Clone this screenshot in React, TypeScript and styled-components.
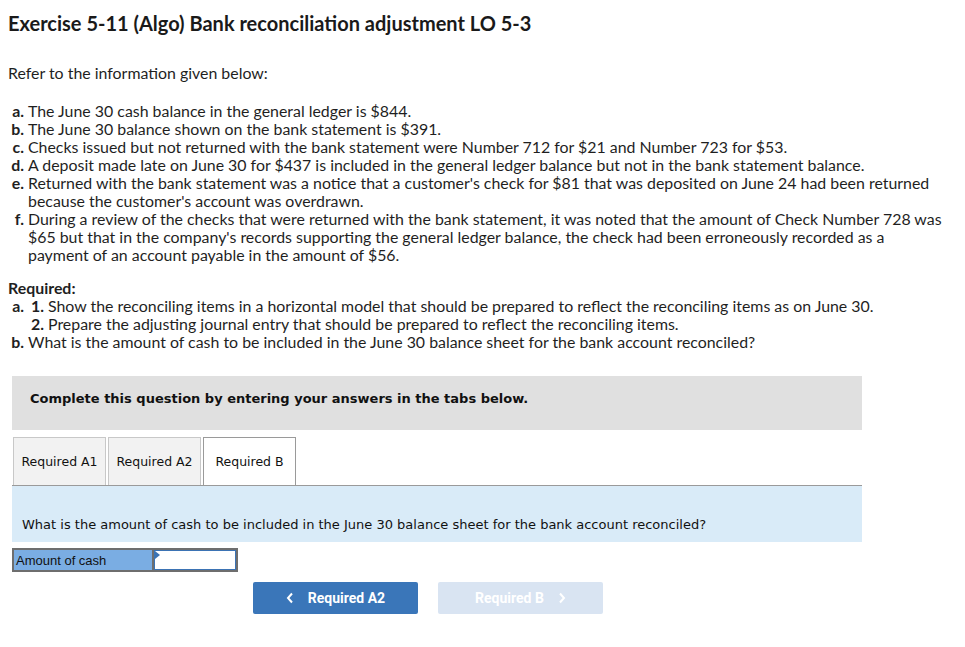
import React from "react";
import styled, { createGlobalStyle } from "styled-components";

const Global = createGlobalStyle`
  html, body { margin: 0; padding: 0; background: #fff; }
  body { font-family: Lato, "Open Sans", sans-serif; color: #1f1f1f; }
  * { box-sizing: border-box; }
`;

const Page = styled.div`
  padding: 10px 22px 30px 8px;
  width: 965px;
`;

const Title = styled.h1`
  font-family: Lato, sans-serif;
  font-weight: 700;
  font-size: 20px;
  line-height: 26px;
  margin: 0 0 28px 0;
  color: #1a1a1a;
`;

const Para = styled.p`
  margin: 0 0 20px 0;
  font-size: 15.9px;
  line-height: 18px;
`;

const List = styled.ol`
  list-style: none;
  margin: 0;
  padding: 0;
  font-size: 15.9px;
  line-height: 18px;
`;

const Item = styled.li`
  display: grid;
  grid-template-columns: 20px 1fr;
`;

const Marker = styled.span`
  font-weight: 700;
  text-align: right;
  padding-right: 4px;
`;

const Text = styled.span``;

const InfoBlock = styled.div`
  margin-bottom: 15px;
`;

const ReqHead = styled.div`
  font-size: 15.9px;
  line-height: 18px;
  font-weight: 700;
`;

const SubItem = styled.div`
  display: grid;
  grid-template-columns: 20px 1fr;
`;

const Panel = styled.div`
  margin: 25px 0 0 4px;
  width: 850px;
  font-family: Verdana, "DejaVu Sans", sans-serif;
`;

const Banner = styled.div`
  background: #e0e0e0;
  height: 54px;
  display: flex;
  align-items: center;
  padding: 0 0 9px 18px;
  font-weight: 700;
  font-size: 13px;
  color: #111;
`;

const Tabs = styled.div`
  display: flex;
  margin-top: 7px;
  border-bottom: 1px solid #9a9a9a;
  padding-left: 1px;
  gap: 2px;
`;

const Tab = styled.div<{ $active?: boolean }>`
  width: 93px;
  height: 48px;
  display: flex;
  align-items: center;
  justify-content: center;
  font-size: 12.5px;
  color: #111;
  background: ${(p) => (p.$active ? "#fff" : "#f2f2f2")};
  border: 1px solid ${(p) => (p.$active ? "#9a9a9a" : "#c8c8c8")};
  border-bottom: none;
  margin-bottom: ${(p) => (p.$active ? "-1px" : "0")};
`;

const Question = styled.div`
  background: #d9ebf8;
  height: 56px;
  padding: 0 0 10px 10px;
  display: flex;
  align-items: flex-end;
  font-size: 13px;
  color: #111;
`;

const AnswerRow = styled.div`
  display: flex;
  margin-top: 6px;
  height: 24px;
`;

const AnswerLabel = styled.div`
  width: 140px;
  background: #7aade3;
  border: 2px solid #6e6e6e;
  border-right: none;
  font-family: Arial, "Liberation Sans", sans-serif;
  font-size: 13px;
  display: flex;
  align-items: center;
  padding-left: 2px;
  color: #111;
`;

const AnswerInput = styled.div`
  position: relative;
  width: 86px;
  background: #fff;
  border: 2px solid #6e6e6e;
  box-shadow: inset 0 0 0 1px #3b73b4;
`;

const Flag = styled.span`
  position: absolute;
  left: 1px;
  top: 1px;
  width: 0;
  height: 0;
  border-top: 4px solid transparent;
  border-bottom: 4px solid transparent;
  border-left: 5px solid #3b73b4;
`;

const Nav = styled.div`
  display: flex;
  gap: 20px;
  margin: 10px 0 0 241px;
`;

const NavButton = styled.div<{ $disabled?: boolean }>`
  width: 165px;
  height: 32px;
  border-radius: 2px;
  background: ${(p) => (p.$disabled ? "#d9e4f2" : "#3a76b9")};
  color: #fff;
  font-family: Roboto, sans-serif;
  font-weight: 700;
  font-size: 14px;
  display: flex;
  align-items: center;
  justify-content: center;
  gap: 14px;
`;

const Chevron = ({ dir }: { dir: "left" | "right" }) => (
  <svg width="8" height="12" viewBox="0 0 8 12">
    <path
      d={dir === "left" ? "M6 1.5 L2 6 L6 10.5" : "M2 1.5 L6 6 L2 10.5"}
      fill="none"
      stroke="#fff"
      strokeWidth="2"
    />
  </svg>
);

const info: [string, string][] = [
  ["a.", "The June 30 cash balance in the general ledger is $844."],
  ["b.", "The June 30 balance shown on the bank statement is $391."],
  ["c.", "Checks issued but not returned with the bank statement were Number 712 for $21 and Number 723 for $53."],
  ["d.", "A deposit made late on June 30 for $437 is included in the general ledger balance but not in the bank statement balance."],
  ["e.", "Returned with the bank statement was a notice that a customer's check for $81 that was deposited on June 24 had been returned because the customer's account was overdrawn."],
  ["f.", "During a review of the checks that were returned with the bank statement, it was noted that the amount of Check Number 728 was $65 but that in the company's records supporting the general ledger balance, the check had been erroneously recorded as a payment of an account payable in the amount of $56."],
];

export default function App() {
  return (
    <>
      <Global />
      <Page>
        <Title>Exercise 5-11 (Algo) Bank reconciliation adjustment LO 5-3</Title>
        <Para>Refer to the information given below:</Para>
        <InfoBlock>
          <List>
            {info.map(([m, t]) => (
              <Item key={m}>
                <Marker>{m}</Marker>
                <Text>{t}</Text>
              </Item>
            ))}
          </List>
        </InfoBlock>
        <ReqHead>Required:</ReqHead>
        <List>
          <Item>
            <Marker>a.</Marker>
            <div>
              <SubItem>
                <Marker>1.</Marker>
                <Text>Show the reconciling items in a horizontal model that should be prepared to reflect the reconciling items as on June 30.</Text>
              </SubItem>
              <SubItem>
                <Marker>2.</Marker>
                <Text>Prepare the adjusting journal entry that should be prepared to reflect the reconciling items.</Text>
              </SubItem>
            </div>
          </Item>
          <Item>
            <Marker>b.</Marker>
            <Text>What is the amount of cash to be included in the June 30 balance sheet for the bank account reconciled?</Text>
          </Item>
        </List>
        <Panel>
          <Banner>Complete this question by entering your answers in the tabs below.</Banner>
          <Tabs>
            <Tab>Required A1</Tab>
            <Tab>Required A2</Tab>
            <Tab $active>Required B</Tab>
          </Tabs>
          <Question>What is the amount of cash to be included in the June 30 balance sheet for the bank account reconciled?</Question>
          <AnswerRow>
            <AnswerLabel>Amount of cash</AnswerLabel>
            <AnswerInput>
              <Flag />
            </AnswerInput>
          </AnswerRow>
          <Nav>
            <NavButton>
              <Chevron dir="left" />
              Required A2
            </NavButton>
            <NavButton $disabled>
              Required B
              <Chevron dir="right" />
            </NavButton>
          </Nav>
        </Panel>
      </Page>
    </>
  );
}
